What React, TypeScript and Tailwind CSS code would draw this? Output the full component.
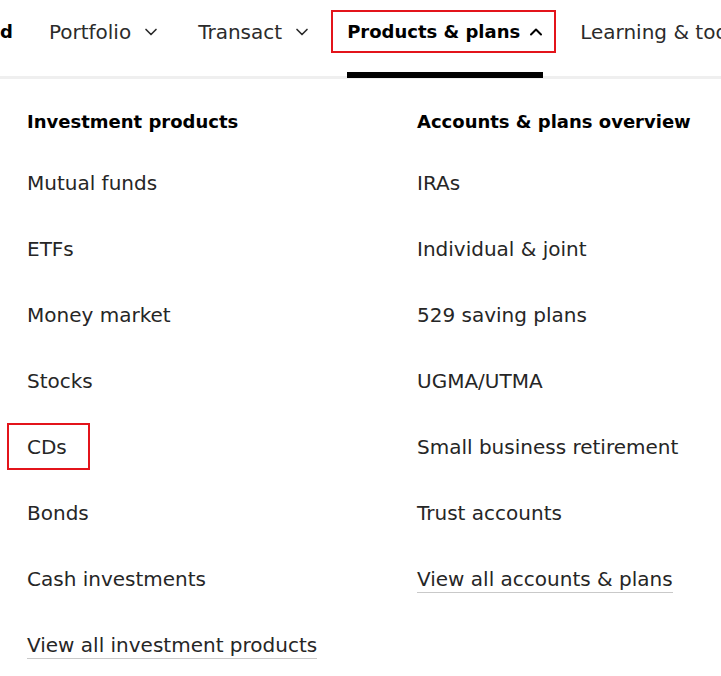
import { ChevronDown, ChevronUp } from 'lucide-react';

const investmentProducts = ['Mutual funds', 'ETFs', 'Money market', 'Stocks', 'CDs', 'Bonds', 'Cash investments'];
const accountsPlans = ['IRAs', 'Individual & joint', '529 saving plans', 'UGMA/UTMA', 'Small business retirement', 'Trust accounts'];

function NavItem({ label }: { label: string }) {
    return (
        <div className="flex items-center gap-[10px] text-[#2b2b2b]">
            <span>{label}</span>
            <ChevronDown size={20} strokeWidth={2} />
        </div>
    );
}

function MenuColumn({ title, items, viewAll, highlight }: { title: string; items: string[]; viewAll: string; highlight?: string }) {
    return (
        <div className="flex flex-col">
            <h3 className="h-[26px] text-[18px] font-bold text-black">{title}</h3>
            <ul className="mt-[15px] flex flex-col">
                {items.map(item => (
                    <li key={item} className="relative flex h-[66px] items-center">
                        <a className="text-[#262626]">{item}</a>
                        {item === highlight && (
                            <span className="absolute left-[-20px] top-[9px] h-[47px] w-[83px] border-2 border-[#e3141b]" />
                        )}
                    </li>
                ))}
                <li className="flex h-[66px] items-center">
                    <a className="border-b border-[#c9c9c9] text-[#262626]">{viewAll}</a>
                </li>
            </ul>
        </div>
    );
}

export default function App() {
    return (
        <div className="h-[676px] w-[721px] overflow-hidden bg-white text-[20px] leading-[26px]" style={{ fontFamily: '"DejaVu Sans", sans-serif' }}>
            <nav className="h-[79px] border-b-[3px] border-[#efefef]">
                <div className="flex h-[64px] items-center whitespace-nowrap">
                    <span className="text-[18px] font-bold text-black">d</span>
                    <div className="ml-[36px]">
                        <NavItem label="Portfolio" />
                    </div>
                    <div className="ml-[37px]">
                        <NavItem label="Transact" />
                    </div>
                    <div className="relative ml-[35px] flex items-center gap-[6px] text-[18px] font-bold text-black">
                        <span>Products &amp; plans</span>
                        <ChevronUp size={20} strokeWidth={2.4} />
                        <span className="absolute left-[-16px] right-[-10px] top-[-9px] bottom-[-8px] border-2 border-[#e3141b]" />
                        <span className="absolute left-0 right-[3px] top-[53px] h-[6px] bg-black" />
                    </div>
                    <span className="ml-[34px] text-[#2b2b2b]">Learning &amp; tools</span>
                </div>
            </nav>
            <div className="grid grid-cols-[390px_1fr] pl-[27px] pt-[30px]">
                <MenuColumn title="Investment products" items={investmentProducts} viewAll="View all investment products" highlight="CDs" />
                <MenuColumn title="Accounts & plans overview" items={accountsPlans} viewAll="View all accounts & plans" />
            </div>
        </div>
    );
}
